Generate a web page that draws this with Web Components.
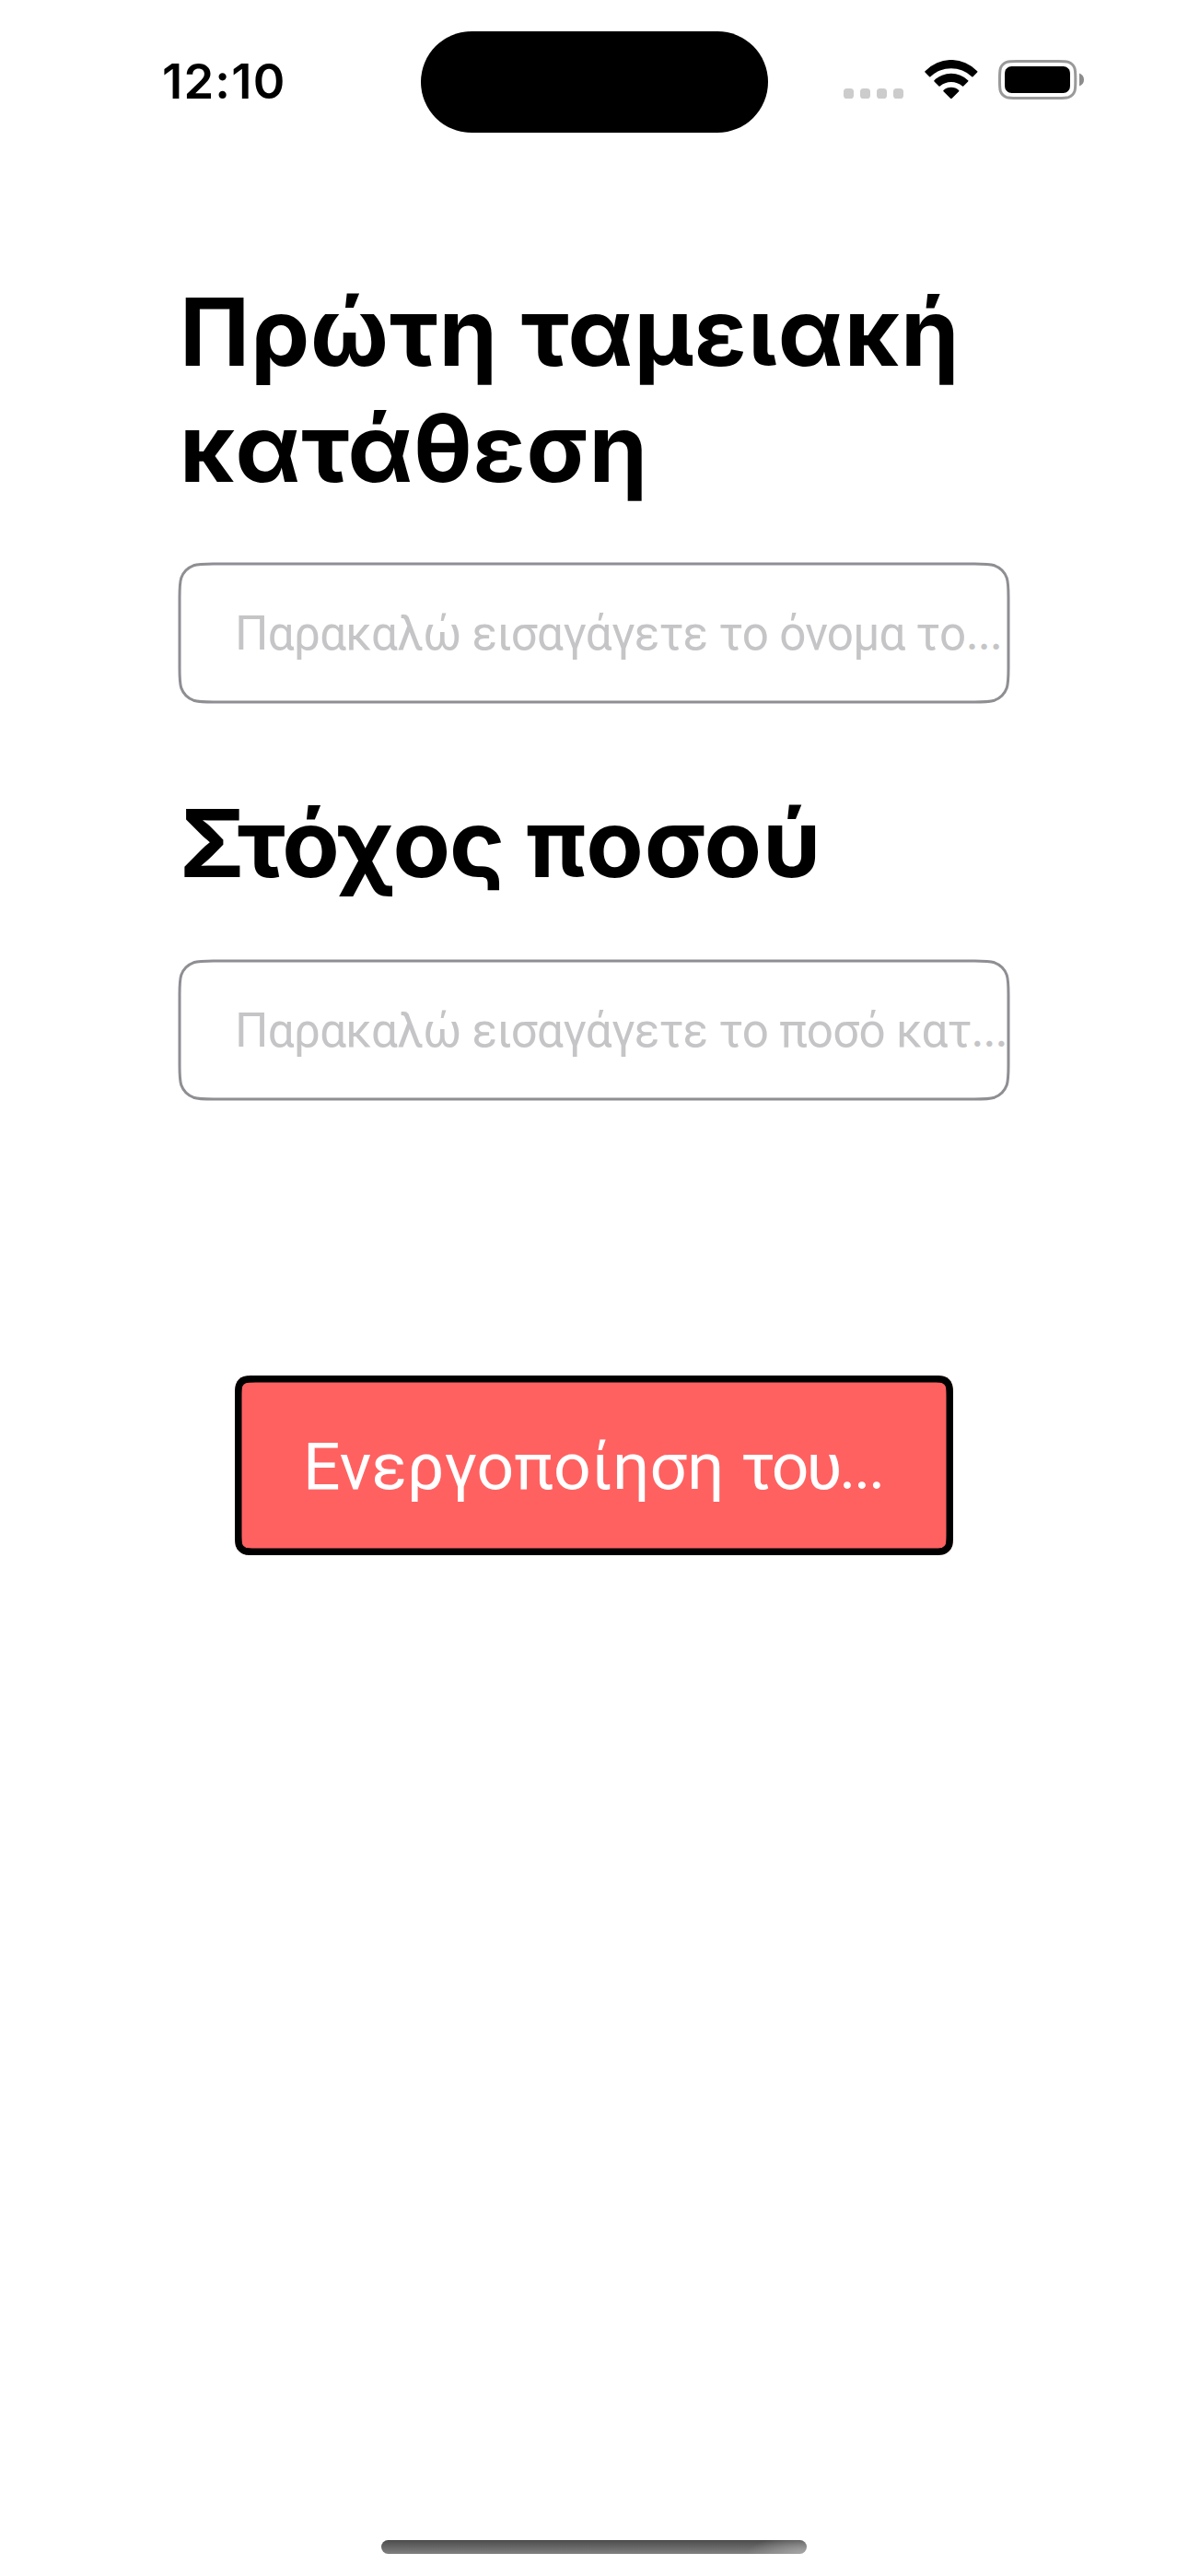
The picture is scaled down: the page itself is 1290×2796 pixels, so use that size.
<!DOCTYPE html>
<html lang="el">
<head>
<meta charset="utf-8">
<title>Πρώτη ταμειακή κατάθεση</title>
<style>
html, body { margin: 0; background: #fff; }
</style>
</head>
<body>
<deposit-screen></deposit-screen>

<script>
// Path of a rectangle whose corners ease in and out of the straight sides.
function smoothRect(x, y, w, h, r) {
  const k = [1.52866, 1.08849, 0.86841, 0.63149, 0.37282, 0.16906, 0.07491].map(v => v * r);
  const corner = (px, py, ax, ay, bx, by) => {
    // (ax, ay) points back along the incoming side, (bx, by) along the outgoing one
    const p = (a, b) => `${(px + ax * a + bx * b).toFixed(3)} ${(py + ay * a + by * b).toFixed(3)}`;
    return `L${p(k[0], 0)} C${p(k[1], 0)} ${p(k[2], 0)} ${p(k[3], k[6])} ` +
           `C${p(k[4], k[5])} ${p(k[5], k[4])} ${p(k[6], k[3])} C${p(0, k[2])} ${p(0, k[1])} ${p(0, k[0])} `;
  };
  return `M${x + w / 2} ${y} ` +
    corner(x + w, y, -1, 0, 0, 1) + corner(x + w, y + h, 0, -1, -1, 0) +
    corner(x, y + h, 1, 0, 0, -1) + corner(x, y, 0, 1, 1, 0) + 'Z';
}

function define(name, html) {
  customElements.define(name, class extends HTMLElement {
    constructor() {
      super();
      this.attachShadow({ mode: 'open' }).innerHTML = html;
    }
  });
}

define('signal-dots', `
  <style>:host{display:flex;gap:7px;padding-top:31px;height:17px}
  i{width:11px;height:11px;border-radius:3.6px;background:#ccc}</style>
  <i></i><i></i><i></i><i></i>`);

define('wifi-icon', `
  <style>:host{display:block;width:58px;height:48px}svg{display:block}</style>
  <svg width="58" height="48" viewBox="341 75 174 144">
    <path d="M342.500 111.500A117 117 0 0 1 512.500 111.500Q514.500 113.500 512.500 115.500L498.500 129.500Q497 131 495 129.500A98 98 0 0 0 360 129.500Q358 131 356.500 129.500L342.500 115.500Q340.500 113.500 342.500 111.500Z"/>
    <path d="M372.500 141.500A79 79 0 0 1 482.500 141.500Q484.500 143.500 482.500 145.500L467.500 160.500Q466 162 464 160.500A56 56 0 0 0 391 160.500Q389 162 387.500 160.500L372.500 145.500Q370.500 143.500 372.500 141.500Z"/>
    <path d="M402.500 174A37 37 0 0 1 452.500 174Q454.500 176 452.500 178L430 200Q427.500 202.500 425 200L402.500 178Q400.500 176 402.500 174Z"/>
  </svg>`);

define('battery-icon', `
  <style>:host{display:block;width:94px;height:48px}svg{display:block}</style>
  <svg width="94" height="48" viewBox="0 0 94 48">
    <path d="${smoothRect(1.5, 1.5, 82.3, 40, 12)}" fill="none" stroke="#999" stroke-width="3"/>
    <path d="${smoothRect(7, 7, 71, 29, 7.5)}"/>
    <path d="M88 14.500Q93 16.500 93 21.500Q93 26.500 88 28.500Z" fill="#8c8c8c"/>
  </svg>`);

define('status-bar', `
  <style>
  :host{display:flex;align-items:center;height:178px}
  .time{box-sizing:border-box;width:457px;padding-left:176px;font:600 52.5px/64px Inter,sans-serif;letter-spacing:1.2px;margin-top:-2px}
  .island{width:376.500px;height:110.500px;border-radius:56px;background:#000}
  .icons{display:flex;margin-left:82.500px;height:48px}
  wifi-icon{margin-left:22.500px}
  battery-icon{margin-left:22.500px}
  </style>
  <div class="time"><slot></slot></div>
  <div class="island"></div>
  <div class="icons"><signal-dots></signal-dots><wifi-icon></wifi-icon><battery-icon></battery-icon></div>`);

define('field-title', `
  <style>:host{display:block}h1{margin:0;font:700 102px/126px Inter,sans-serif;color:#000}</style>
  <h1><slot></slot></h1>`);

define('text-field', `
  <style>
  :host{display:grid;height:150px}
  svg,.hint{grid-area:1/1}
  svg{display:block;overflow:visible}
  .hint{padding:1px 0 0 60px;font:400 51.1px/150px Roboto,sans-serif;color:#c5c5c7;white-space:nowrap}
  </style>
  <svg width="900" height="150"><path d="${smoothRect(0, 0, 900, 150, 24)}" fill="#fff" stroke="#8e8e93" stroke-width="3"/></svg>
  <div class="hint"><slot></slot></div>`);

define('action-button', `
  <style>
  :host{display:grid;width:780px;height:195px}
  svg,.label{grid-area:1/1}
  svg{display:block}
  .label{padding:1px 0 0 74px;font:400 71.3px/195px Roboto,sans-serif;letter-spacing:.13px;color:#fff;white-space:nowrap}
  </style>
  <svg width="780" height="195">
    <clipPath id="c"><path d="${smoothRect(0, 0, 780, 195, 15)}"/></clipPath>
    <path d="${smoothRect(0, 0, 780, 195, 15)}" fill="#ff6161" stroke="#000" stroke-width="15" clip-path="url(#c)"/>
  </svg>
  <div class="label"><slot></slot></div>`);

define('home-indicator', `
  <style>:host{display:block;width:462px;height:15px;border-radius:7.5px;
  background:radial-gradient(ellipse 65px 20px at 100% 100%,#a8a8a8 0%,rgba(168,168,168,0) 100%),linear-gradient(#4c4c4c,#808080)}</style>`);

define('deposit-screen', `
  <style>
  :host{display:flex;flex-direction:column;box-sizing:border-box;width:1290px;height:2796px;padding-bottom:24px;background:#fff;overflow:hidden}
  main{display:flex;flex-direction:column;padding:119px 195px 0}
  .first{letter-spacing:.8px}
  .even{letter-spacing:1.250px}
  .second{margin-top:90px}
  .tight{letter-spacing:-1px}
  .loose{letter-spacing:.9px}
  text-field{margin-top:63px;letter-spacing:-.72px}
  .second + text-field{margin-top:65px}
  .dots{font-family:Inter,sans-serif;font-weight:500;font-size:43px;letter-spacing:0;margin-left:0}
  .name .dots{margin-left:.5px}
  action-button{align-self:center;margin-top:300px}
  .tou{letter-spacing:-3px}
  action-button .dots{font-size:50px;font-weight:600;margin-left:.5px}
  home-indicator{margin:auto auto 0}
  </style>
  <status-bar>12:10</status-bar>
  <main>
    <field-title class="first">Πρώτη <span class="even">ταμειακή</span> κατάθεση</field-title>
    <text-field class="name">Παρακαλώ εισαγάγετε το όνομα το<span class="dots">…</span></text-field>
    <field-title class="second"><span class="tight">Στόχος</span> <span class="loose">ποσού</span></field-title>
    <text-field>Παρακαλώ εισαγάγετε το ποσό κατ<span class="dots">…</span></text-field>
    <action-button>Ενεργοποίηση <span class="tou">του</span><span class="dots">…</span></action-button>
  </main>
  <home-indicator></home-indicator>`);
</script>
</body>
</html>
